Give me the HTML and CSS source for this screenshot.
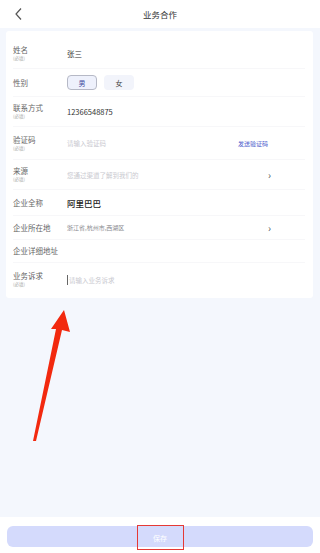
FILE: index.html
```html
<!DOCTYPE html>
<html>
<head>
	<title>业务合作</title>
	<meta charset="utf-8">
	<link rel="stylesheet" href="styles.css">
</head>
<body>
	<div class="page">
		<div class="header">
			<svg class="back" width="10" height="14" viewBox="0 0 10 14"><path d="M7 1.5 L2 7 L7 12.5" fill="none" stroke="#555" stroke-width="1.2"/></svg>
			<span class="title">业务合作</span>
		</div>
		<div class="content">
			<div class="card">
				<div class="row r1">
					<div class="label">姓名<em>(必填)</em></div>
					<div class="value">张三</div>
				</div>
				<div class="row r2">
					<div class="label">性别</div>
					<div class="value sex">
						<span class="sex-btn on">男</span>
						<span class="sex-btn">女</span>
					</div>
				</div>
				<div class="row r3">
					<div class="label">联系方式<em>(必填)</em></div>
					<div class="value">12366548875</div>
				</div>
				<div class="row r4">
					<div class="label">验证码<em>(必填)</em></div>
					<div class="value hint">请输入验证码</div>
					<div class="send">发送验证码</div>
				</div>
				<div class="row r5">
					<div class="label">来源<em>(必填)</em></div>
					<div class="value hint">您通过渠道了解到我们的</div>
					<div class="arrow">›</div>
				</div>
				<div class="row r6">
					<div class="label">企业全称</div>
					<div class="value bold">阿里巴巴</div>
				</div>
				<div class="row r7">
					<div class="label">企业所在地</div>
					<div class="value area">浙江省,杭州市,西湖区</div>
					<div class="arrow">›</div>
				</div>
				<div class="row r8">
					<div class="label">企业详细地址</div>
					<div class="value"></div>
				</div>
				<div class="row r9 last">
					<div class="label">业务诉求<em>(必填)</em></div>
					<div class="value hint"><i class="cursor"></i>请输入业务诉求</div>
				</div>
			</div>
		</div>
		<div class="footer">
			<div class="save">
				<span class="save-text">保存</span>
			</div>
		</div>
	</div>
	<svg class="mark" width="320" height="553" viewBox="0 0 320 553">
		<polygon points="64,310 70,332 62,330 36,441 33,441 56,329 51,329" fill="#f2290f"/>
	</svg>
</body>
</html>
```
FILE: styles.css
```css
*{
	margin: 0;
	padding: 0;
}
body{
	width: 320px;
	height: 553px;
	overflow: hidden;
	font-family: "Noto Sans CJK SC", "Noto Sans", sans-serif;
	background: #fff;
}
.page{
	display: flex;
	flex-direction: column;
	height: 553px;
}
.header{
	height: 28px;
	display: flex;
	align-items: center;
	justify-content: center;
	position: relative;
	background: #fff;
}
.back{
	position: absolute;
	left: 14px;
	top: 7px;
}
.title{
	font-size: 8.5px;
	color: #333;
}
.content{
	flex: 1;
	background: #f4f7fd;
	padding: 3px 7px 0 6px;
}
.card{
	background: #fff;
	border-radius: 3px;
	padding: 8px 8px 2px 7px;
}
.row{
	display: flex;
	align-items: center;
	box-sizing: border-box;
	border-bottom: 1px solid #f7f7f9;
}
.row.last{
	border-bottom: none;
}
.r1{height: 30px;}
.r2{height: 28px;}
.r3{height: 30px;}
.r4{height: 33px;}
.r5{height: 30px;}
.r6{height: 26px;}
.r7{height: 24px;}
.r8{height: 23px;}
.r9{height: 33px;}
.label{
	width: 54px;
	font-size: 7.5px;
	line-height: 10px;
	color: #666;
	display: flex;
	flex-direction: column;
}
.label em{
	font-style: normal;
	font-size: 4.5px;
	line-height: 7px;
	color: #aaa;
}
.value{
	flex: 1;
	font-size: 7.5px;
	color: #333;
}
.hint{
	color: #c9c9cf;
	font-size: 6.5px;
	display: flex;
	align-items: center;
}
.area{
	color: #8a8a90;
	font-size: 6px;
}
.bold{
	font-weight: 500;
	font-size: 8.5px;
	color: #222;
}
.sex{
	display: flex;
	gap: 7px;
}
.sex-btn{
	width: 30px;
	height: 15px;
	box-sizing: border-box;
	border-radius: 4px;
	background: #f2f4fb;
	font-size: 7px;
	color: #444;
	display: flex;
	align-items: center;
	justify-content: center;
}
.sex-btn.on{
	border: 1px solid #b6b9c6;
	background: #eef1fc;
	color: #3b4aa0;
}
.send{
	font-size: 6px;
	color: #4d5ccc;
	margin-right: 37px;
}
.arrow{
	font-size: 10px;
	color: #555;
	margin-right: 34px;
	line-height: 10px;
}
.cursor{
	display: inline-block;
	width: 1px;
	height: 10px;
	background: #666;
	margin-right: 1px;
}
.footer{
	height: 36px;
	background: #fff;
	padding: 9px 7px 0 7px;
	box-sizing: border-box;
}
.save{
	height: 21px;
	border-radius: 6px;
	background: #d4dafc;
	display: flex;
	align-items: center;
	justify-content: center;
}
.save-text{
	font-size: 7px;
	color: #fff;
	width: 47px;
	height: 25px;
	box-sizing: border-box;
	border: 1px solid #e53935;
	display: flex;
	align-items: center;
	justify-content: center;
	position: relative;
	top: 1px;
}
.mark{
	position: absolute;
	left: 0;
	top: 0;
	pointer-events: none;
}
```
